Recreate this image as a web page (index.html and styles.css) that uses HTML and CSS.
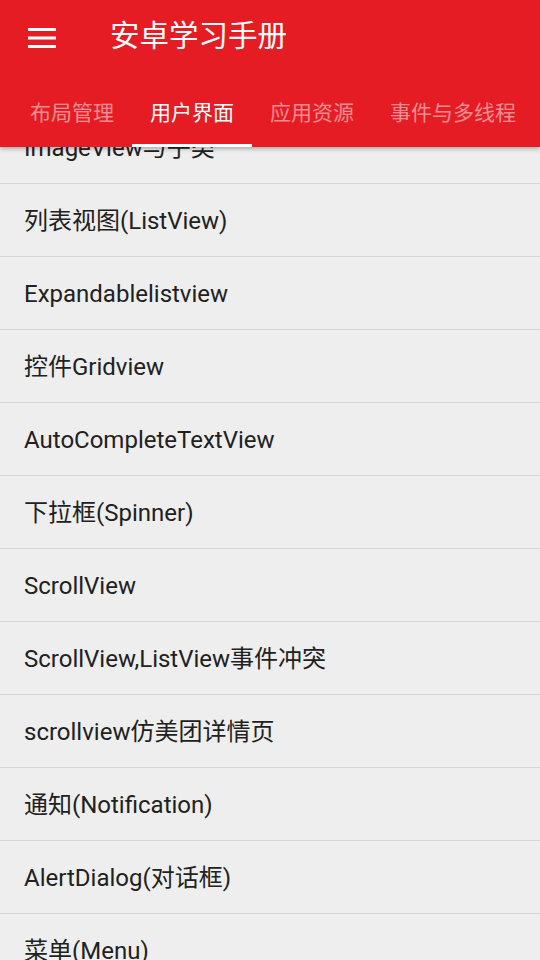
FILE: index.html
```html
<!DOCTYPE html>
<html lang="zh">
<head>
<meta charset="utf-8">
<link rel="stylesheet" href="styles.css">
</head>
<body>
<div class="app">
  <header class="appbar">
    <div class="toolbar">
      <button class="menu-btn" aria-label="menu">
        <svg width="28" height="22" viewBox="0 0 28 22"><rect x="0" y="1" width="28" height="3" fill="#fff"/><rect x="0" y="9.5" width="28" height="3" fill="#fff"/><rect x="0" y="18" width="28" height="3" fill="#fff"/></svg>
      </button>
      <div class="title">安卓学习手册</div>
    </div>
    <nav class="tabs">
      <div class="tab">布局管理</div>
      <div class="tab active">用户界面</div>
      <div class="tab">应用资源</div>
      <div class="tab">事件与多线程</div>
    </nav>
  </header>
  <main class="viewport">
    <ul class="list">
      <li class="row"><span class="label">ImageView与子类</span></li>
      <li class="row"><span class="label">列表视图(ListView)</span></li>
      <li class="row"><span class="label">Expandablelistview</span></li>
      <li class="row"><span class="label">控件Gridview</span></li>
      <li class="row"><span class="label">AutoCompleteTextView</span></li>
      <li class="row"><span class="label">下拉框(Spinner)</span></li>
      <li class="row"><span class="label">ScrollView</span></li>
      <li class="row"><span class="label">ScrollView,ListView事件冲突</span></li>
      <li class="row"><span class="label">scrollview仿美团详情页</span></li>
      <li class="row"><span class="label">通知(Notification)</span></li>
      <li class="row"><span class="label">AlertDialog(对话框)</span></li>
      <li class="row"><span class="label">菜单(Menu)</span></li>
    </ul>
  </main>
</div>
</body>
</html>
```
FILE: styles.css
```css
* { box-sizing: border-box; }
html, body { margin: 0; padding: 0; }
body {
  width: 540px;
  height: 960px;
  overflow: hidden;
  background: #eeeeee;
  font-family: Roboto, "Noto Sans CJK SC", sans-serif;
}
.app {
  display: flex;
  flex-direction: column;
  height: 960px;
}
.appbar {
  position: relative;
  z-index: 2;
  background: #e61c24;
  height: 147px;
  flex: none;
  box-shadow: 0 2px 4px rgba(0,0,0,0.28);
  display: flex;
  flex-direction: column;
}
.toolbar {
  height: 75px;
  display: flex;
  align-items: center;
}
.menu-btn {
  background: none;
  border: 0;
  padding: 0;
  margin-left: 28px;
  width: 28px;
  height: 22px;
  display: flex;
  margin-top: 1px;
}
.title {
  margin-left: 54px;
  color: #ffffff;
  font-size: 29.5px;
  line-height: 1;
  margin-top: -1px;
}
.tabs {
  display: flex;
  height: 72px;
  padding-left: 12px;
}
.tab {
  padding: 0 18px;
  height: 72px;
  display: flex;
  align-items: center;
  font-size: 21px;
  color: rgba(255,255,255,0.5);
  border-bottom: 3px solid transparent;
  padding-top: 2px;
}
.tab.active {
  color: #ffffff;
  border-bottom-color: #ffffff;
}
.viewport {
  flex: 1;
  overflow: hidden;
  position: relative;
  z-index: 1;
}
.list {
  list-style: none;
  margin: -36px 0 0 0;
  padding: 0;
}
.row {
  height: 73px;
  border-bottom: 1px solid #d6d6d6;
  display: flex;
  align-items: center;
  padding-left: 24px;
  font-size: 24px;
  color: #212121;
}
.label {
  display: block;
  line-height: 28px;
  height: 28px;
  margin-top: 1px;
}
```
